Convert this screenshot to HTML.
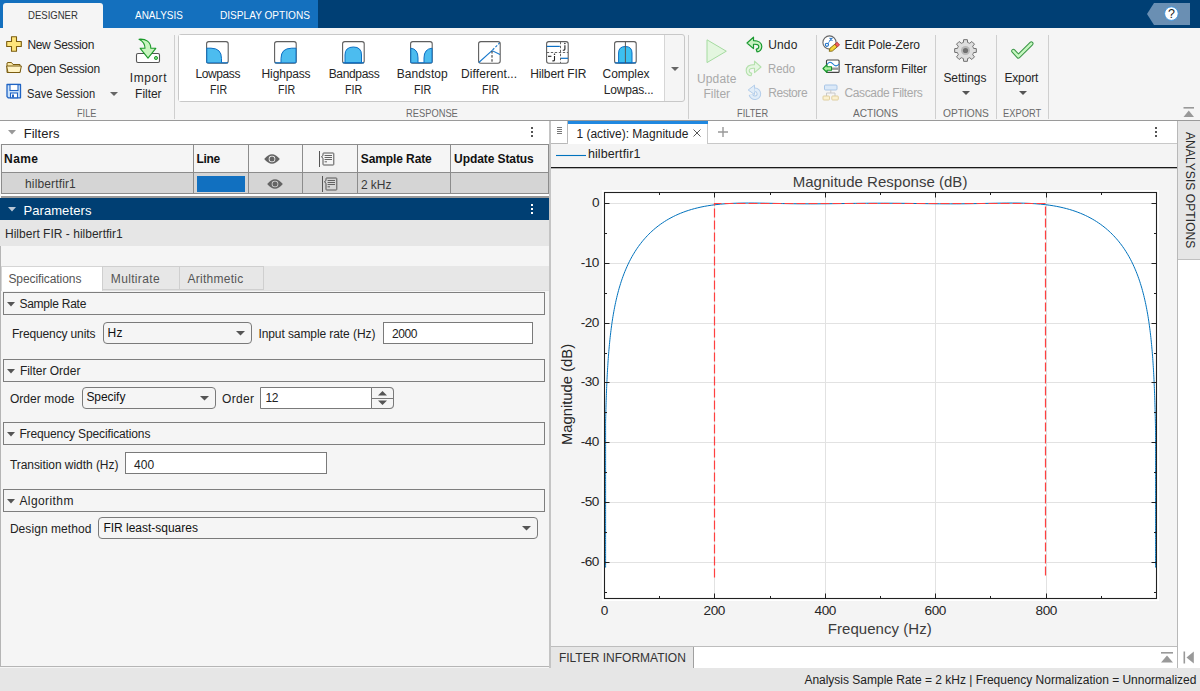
<!DOCTYPE html>
<html><head><meta charset="utf-8">
<style>
*{box-sizing:border-box;margin:0;padding:0}
html,body{width:1200px;height:691px;overflow:hidden;background:#f5f5f5;font-family:"Liberation Sans",sans-serif;font-size:12px;color:#222}
.a{position:absolute;white-space:nowrap}
svg.a{overflow:visible}
</style></head><body>

<div class="a" style="left:0;top:0;width:318px;height:28px;background:#1470be"></div>
<div class="a" style="left:318px;top:0;width:882px;height:28px;background:#003f74"></div>
<div class="a" style="left:3px;top:3px;width:100px;height:25px;background:#f5f5f5;border-radius:3px 3px 0 0"></div>
<svg class="a" style="left:1147px;top:3px" width="43" height="22"><path d="M7 0H43V22H7L0 11Z" fill="#6a8fb3"/><circle cx="24.4" cy="10.6" r="6.8" fill="#fff" stroke="#3592e0" stroke-width="0.9"/><text x="24.5" y="15" text-anchor="middle" font-family="Liberation Sans" font-size="12.5" fill="#222">?</text></svg>
<div class="a" style="left:0;top:120px;width:1200px;height:1px;background:#9a9a9a"></div>
<div class="a" style="left:174px;top:35px;width:1px;height:84px;background:#cfcfcf"></div>
<div class="a" style="left:688px;top:35px;width:1px;height:84px;background:#cfcfcf"></div>
<div class="a" style="left:816px;top:35px;width:1px;height:84px;background:#cfcfcf"></div>
<div class="a" style="left:935px;top:35px;width:1px;height:84px;background:#cfcfcf"></div>
<div class="a" style="left:996px;top:35px;width:1px;height:84px;background:#cfcfcf"></div>
<div class="a" style="left:1048px;top:35px;width:1px;height:84px;background:#cfcfcf"></div>
<div class="a" style="left:178px;top:34px;width:507px;height:68px;border:1px solid #c8c8c8;border-radius:3px;background:#f5f5f5"></div>
<div class="a" style="left:179px;top:35px;width:486px;height:66px;background:#fff;border-right:1px solid #d6d6d6"></div>
<svg class="a" style="left:110px;top:92px" width="8" height="4"><path d="M0 0H8L4.0 4Z" fill="#666"/></svg>
<svg class="a" style="left:671px;top:67px" width="8" height="4"><path d="M0 0H8L4.0 4Z" fill="#666"/></svg>
<svg class="a" style="left:962px;top:91px" width="8" height="4"><path d="M0 0H8L4.0 4Z" fill="#555"/></svg>
<svg class="a" style="left:1019px;top:91px" width="8" height="4"><path d="M0 0H8L4.0 4Z" fill="#555"/></svg>
<svg class="a" style="left:1183px;top:107px" width="12" height="11"><rect x="0.5" y="0" width="10.5" height="1.6" fill="#999"/><path d="M0.5 10H11L5.75 3.5Z" fill="#999"/></svg>
<svg class="a" style="left:6px;top:36px" width="16" height="16"><path d="M5.5 0.7H10.5V5.5H15.3V10.5H10.5V15.3H5.5V10.5H0.7V5.5H5.5Z" fill="#ffe57a" stroke="#7a5c10" stroke-width="1.1" stroke-linejoin="round"/></svg>
<svg class="a" style="left:6px;top:60px" width="16" height="14"><path d="M1 3V12.5H14V4.5H7L5.5 2.5H2Z" fill="#fbe9a8" stroke="#7a5c10" stroke-width="1"/><path d="M0.6 6H13L15.4 6L14 12.5H2Z" fill="#fff3c4" stroke="#7a5c10" stroke-width="1" stroke-linejoin="round"/></svg>
<svg class="a" style="left:6px;top:83px" width="16" height="16"><path d="M1 1.5H14.5V14.8H2.2L1 13.6Z" fill="#cde4fb" stroke="#1f63c4" stroke-width="1.3" stroke-linejoin="round"/><rect x="4" y="1.5" width="8" height="6" fill="#fff" stroke="#1f63c4" stroke-width="1.1"/><rect x="4.5" y="10" width="7" height="4.8" fill="#fff" stroke="#1f63c4" stroke-width="1.1"/><rect x="6" y="11.5" width="2" height="3" fill="#1f63c4"/></svg>
<svg class="a" style="left:135px;top:38px" width="26" height="26"><rect x="1.5" y="15.5" width="23" height="9" rx="1.5" fill="#fff" stroke="#555" stroke-width="1.1"/><path d="M4 1.2C11 0.6 15.8 4 15.8 10.3H20.8L13 20.2L5.2 10.3H10C10 6.5 8 3.2 4 1.2Z" fill="#c9f5c0" stroke="#1c9a2a" stroke-width="1.1" stroke-linejoin="round"/><circle cx="21" cy="20" r="1.6" fill="#7ad27a" stroke="#1c9a2a" stroke-width="0.9"/></svg>
<svg class="a" style="left:206px;top:41px" width="23" height="23"><rect x="0.6" y="0.6" width="21.6" height="21.6" rx="2.2" fill="#fff" stroke="#5f5f5f" stroke-width="1.1"/><path d="M0.8 7.2H5Q15.5 7.2 15.5 17.5V21.8H0.8Z" fill="#4cbcef" stroke="#0b6fc4" stroke-width="1"/><path d="M15.5 21.8H22" stroke="#0b6fc4" stroke-width="1.2"/></svg>
<svg class="a" style="left:274px;top:41px" width="23" height="23"><rect x="0.6" y="0.6" width="21.6" height="21.6" rx="2.2" fill="#fff" stroke="#5f5f5f" stroke-width="1.1"/><path d="M22 7.2H17.8Q7 7.2 7 17.5V21.8H22Z" fill="#4cbcef" stroke="#0b6fc4" stroke-width="1"/><path d="M0.8 21.8H7" stroke="#0b6fc4" stroke-width="1.2"/></svg>
<svg class="a" style="left:342px;top:41px" width="23" height="23"><rect x="0.6" y="0.6" width="21.6" height="21.6" rx="2.2" fill="#fff" stroke="#5f5f5f" stroke-width="1.1"/><path d="M3 21.8V14Q3 6 11.4 6Q19.5 6 19.5 14V21.8Z" fill="#4cbcef" stroke="#0b6fc4" stroke-width="1"/><path d="M0.8 21.8H22" stroke="#0b6fc4" stroke-width="1.2"/></svg>
<svg class="a" style="left:410px;top:41px" width="23" height="23"><rect x="0.6" y="0.6" width="21.6" height="21.6" rx="2.2" fill="#fff" stroke="#5f5f5f" stroke-width="1.1"/><path d="M0.8 7.2Q8 8 8 17V21.8H0.8Z" fill="#4cbcef" stroke="#0b6fc4" stroke-width="1"/><path d="M22 7.2Q14 8 14 17V21.8H22Z" fill="#4cbcef" stroke="#0b6fc4" stroke-width="1"/><path d="M8 21.8H14" stroke="#0b6fc4" stroke-width="1.2"/></svg>
<svg class="a" style="left:478px;top:41px" width="23" height="23"><rect x="0.6" y="0.6" width="21.6" height="21.6" rx="2.2" fill="#fff" stroke="#5f5f5f" stroke-width="1.1"/><path d="M0.8 21.5L14 9.6L22 13.6" fill="none" stroke="#1778cc" stroke-width="1.1"/><path d="M14.5 9L21.6 2" fill="none" stroke="#1778cc" stroke-width="1.1" stroke-dasharray="2.5 1.6"/><path d="M14 10V22" stroke="#222" stroke-width="1" stroke-dasharray="2.5 1.6"/></svg>
<svg class="a" style="left:546px;top:41px" width="23" height="23"><rect x="0.6" y="0.6" width="21.6" height="21.6" rx="2.2" fill="#fff" stroke="#5f5f5f" stroke-width="1.1"/><path d="M0.8 5.4H13.8" stroke="#0b6fc4" stroke-width="1.2"/><path d="M14.6 17.3H22" stroke="#0b6fc4" stroke-width="1.2"/><path d="M0.8 11.5H22" stroke="#666" stroke-width="1" stroke-dasharray="2.4 1.6"/><path d="M14.5 0.8V22" stroke="#666" stroke-width="1" stroke-dasharray="2.4 1.6"/><circle cx="18.9" cy="2.5" r="0.75" fill="#222"/><path d="M18.9 4.2V8.3Q18.9 9.3 17.4 9.3H16.8" fill="none" stroke="#222" stroke-width="1.1"/><path d="M2 15.3H5.4" stroke="#222" stroke-width="1.1"/><circle cx="8.5" cy="13.2" r="0.75" fill="#222"/><path d="M8.5 14.9V18.9Q8.5 19.9 7 19.9H6.4" fill="none" stroke="#222" stroke-width="1.1"/></svg>
<svg class="a" style="left:614px;top:41px" width="23" height="23"><rect x="0.6" y="0.6" width="21.6" height="21.6" rx="2.2" fill="#fff" stroke="#5f5f5f" stroke-width="1.1"/><path d="M4.6 21.8V12Q4.6 5.5 11.4 5.5Q18 5.5 18 12V21.8Z" fill="#3cc0f0" stroke="#0b6fc4" stroke-width="1"/><path d="M0.8 21.8H22" stroke="#0b6fc4" stroke-width="1.2"/><path d="M11.4 0.8V22" stroke="#555" stroke-width="1"/></svg>
<svg class="a" style="left:706px;top:39px" width="22" height="25"><path d="M1 0.8V23.6L20.3 12.2Z" fill="#e3f6df" stroke="#a5dba0" stroke-width="1"/></svg>
<svg class="a" style="left:746px;top:36px" width="17" height="17"><path d="M1 7L7.5 1.2V4.6C12.5 4.6 15.8 6.8 15.8 10.5C15.8 13.6 13.5 15.8 11 15.8L10.2 13.2C11.8 13 12.8 12 12.8 10.5C12.8 8.8 10.8 8 7.5 8.3V12.6Z" fill="#c8f2c0" stroke="#1a9830" stroke-width="1.2" stroke-linejoin="round"/></svg>
<svg class="a" style="left:745px;top:60px" width="17" height="17"><path d="M16 7L9.5 1.2V4.6C4.5 4.6 1.2 6.8 1.2 10.5C1.2 13.6 3.5 15.8 6 15.8L6.8 13.2C5.2 13 4.2 12 4.2 10.5C4.2 8.8 6.2 8 9.5 8.3V12.6Z" fill="#e6f6e2" stroke="#b4e0ac" stroke-width="1.1" stroke-linejoin="round"/></svg>
<svg class="a" style="left:747px;top:84px" width="16" height="17"><path d="M7.9 5.8A4 4 0 1 1 3.96 10.49" fill="none" stroke="#b3cdea" stroke-width="4.6"/><path d="M7.9 5.8A4 4 0 1 1 3.96 10.49" fill="none" stroke="#e2edf8" stroke-width="2.6"/><path d="M1.2 6L7.5 1.1V10.5Z" fill="#e2edf8" stroke="#b3cdea" stroke-width="1" stroke-linejoin="round"/><path d="M6.9 4.6V8.2" stroke="#e2edf8" stroke-width="1.2"/></svg>
<svg class="a" style="left:822px;top:35px" width="19" height="17"><circle cx="7.5" cy="7.5" r="6.6" fill="#fff" stroke="#666" stroke-width="1.1"/><path d="M7.6 2.8L10.4 5.6M10.4 2.8L7.6 5.6" stroke="#1a6fc8" stroke-width="1.1"/><path d="M9 4.2L5.6 9" stroke="#1a6fc8" stroke-width="0.7"/><circle cx="4.9" cy="9.8" r="1.6" fill="#fff" stroke="#1a6fc8" stroke-width="1.1"/><path d="M7.2 16.3L7.95 13.3L12.95 9.1L15.25 11.9L10.25 16.1Z" fill="#f5d33a" stroke="#7a6410" stroke-width="0.9" stroke-linejoin="round"/><path d="M12.95 9.1L15.25 7.2L17.55 10L15.25 11.9Z" fill="#f06060" stroke="#b03030" stroke-width="0.8" stroke-linejoin="round"/></svg>
<svg class="a" style="left:822px;top:59px" width="18" height="16"><rect x="4.5" y="1" width="12.6" height="12.4" rx="1" fill="#fff" stroke="#444" stroke-width="1.1"/><path d="M5 5.5C7 2.5 9 2.5 11 5S15 7.5 17 5" fill="none" stroke="#1a7ad0" stroke-width="1.1"/><rect x="8" y="8.5" width="8.5" height="2.4" fill="#999"/><path d="M1 9.5L5 5.6V7.8H9.5V11.2H5V13.5Z" fill="#aef0a0" stroke="#17952a" stroke-width="1.1" stroke-linejoin="round"/></svg>
<svg class="a" style="left:822px;top:84px" width="18" height="18"><rect x="2.5" y="1" width="12.5" height="5" rx="1" fill="#dbe9f8" stroke="#a9c6e6" stroke-width="1"/><path d="M8.8 6V9M4.5 9H13M4.5 9V12M13 9V12" stroke="#c9c9c9" stroke-width="1" fill="none"/><rect x="1" y="12" width="6.5" height="4" rx="0.8" fill="#fbf1cf" stroke="#dccb98" stroke-width="0.9"/><rect x="9.8" y="12" width="6.5" height="4" rx="0.8" fill="#fbf1cf" stroke="#dccb98" stroke-width="0.9"/></svg>
<svg class="a" style="left:954px;top:39px" width="23" height="23"><path d="M19.52 9.37 L22.34 9.64 L22.34 13.36 L19.52 13.63 L19.17 14.68 L18.68 15.66 L20.48 17.85 L17.85 20.48 L15.66 18.68 L14.68 19.17 L13.63 19.52 L13.36 22.34 L9.64 22.34 L9.37 19.52 L8.32 19.17 L7.34 18.68 L5.15 20.48 L2.52 17.85 L4.32 15.66 L3.83 14.68 L3.48 13.63 L0.66 13.36 L0.66 9.64 L3.48 9.37 L3.83 8.32 L4.32 7.34 L2.52 5.15 L5.15 2.52 L7.34 4.32 L8.32 3.83 L9.37 3.48 L9.64 0.66 L13.36 0.66 L13.63 3.48 L14.68 3.83 L15.66 4.32 L17.85 2.52 L20.48 5.15 L18.68 7.34 L19.17 8.32Z" fill="#dedede" stroke="#707070" stroke-width="1" stroke-linejoin="round"/><circle cx="11.5" cy="11.5" r="4.5" fill="#b8b8b8"/><circle cx="11.5" cy="11.5" r="2.6" fill="#707070"/></svg>
<svg class="a" style="left:1010px;top:41px" width="24" height="19"><path d="M3.4 10L8.4 15.4L21.3 2.6" fill="none" stroke="#3a9446" stroke-width="4.4" stroke-linecap="round" stroke-linejoin="round"/><path d="M3.4 10L8.4 15.4L21.3 2.6" fill="none" stroke="#c6f8c0" stroke-width="2.4" stroke-linecap="round" stroke-linejoin="round"/></svg>
<div class="a" style="left:0;top:121px;width:550px;height:23px;background:#fff"></div>
<svg class="a" style="left:8px;top:130px" width="8" height="5"><path d="M0 0H8L4 4.5Z" fill="#999"/></svg>
<div class="a" style="left:531px;top:127px;width:2px;height:2px;background:#555"></div>
<div class="a" style="left:531px;top:131px;width:2px;height:2px;background:#555"></div>
<div class="a" style="left:531px;top:135px;width:2px;height:2px;background:#555"></div>
<div class="a" style="left:1px;top:144px;width:549px;height:53px;background:#fff"></div>
<div class="a" style="left:1px;top:144px;width:549px;height:29px;background:#f5f5f5;border:1px solid #8c8c8c;border-right-width:2px"></div>
<div class="a" style="left:1px;top:172px;width:549px;height:22px;background:#d5d5d5;border:1px solid #8c8c8c;border-top:1px solid #8c8c8c;border-right-width:2px"></div>
<div class="a" style="left:1px;top:196px;width:549px;height:2px;background:#9a9a9a"></div>
<div class="a" style="left:193px;top:145px;width:1px;height:49px;background:#8c8c8c"></div>
<div class="a" style="left:248px;top:145px;width:1px;height:49px;background:#8c8c8c"></div>
<div class="a" style="left:302px;top:145px;width:1px;height:49px;background:#8c8c8c"></div>
<div class="a" style="left:357px;top:145px;width:1px;height:49px;background:#8c8c8c"></div>
<div class="a" style="left:450px;top:145px;width:1px;height:49px;background:#8c8c8c"></div>
<div class="a" style="left:197px;top:176px;width:48px;height:16px;background:#1170c0"></div>
<svg class="a" style="left:263.5px;top:153.6px" width="16" height="10"><path d="M0.2 5Q8 -4.6 15.8 5Q8 14.6 0.2 5Z" fill="#646464"/><circle cx="8" cy="5" r="3.3" fill="#f5f5f5"/><circle cx="8" cy="5" r="2.5" fill="#646464"/></svg>
<svg class="a" style="left:266.5px;top:178.5px" width="16" height="10"><path d="M0.2 5Q8 -4.6 15.8 5Q8 14.6 0.2 5Z" fill="#646464"/><circle cx="8" cy="5" r="3.3" fill="#d5d5d5"/><circle cx="8" cy="5" r="2.5" fill="#646464"/></svg>
<svg class="a" style="left:319px;top:151px" width="16" height="17"><path d="M0.5 0V16" stroke="#555" stroke-width="1"/><path d="M4 2.6Q4 2 4.6 2H14.2Q14.8 2 14.8 2.6V13.4Q14.8 14 14.2 14H4.6Q4 14 4 13.4V7.2L2.4 5.8L4 4.6Z" fill="none" stroke="#555" stroke-width="1"/><path d="M5.6 4.5H13M5.6 6.5H13M5.6 8.5H13M5.6 10.8H8" stroke="#555" stroke-width="0.9"/></svg>
<svg class="a" style="left:322px;top:176px" width="16" height="17"><path d="M0.5 0V16" stroke="#555" stroke-width="1"/><path d="M4 2.6Q4 2 4.6 2H14.2Q14.8 2 14.8 2.6V13.4Q14.8 14 14.2 14H4.6Q4 14 4 13.4V7.2L2.4 5.8L4 4.6Z" fill="none" stroke="#555" stroke-width="1"/><path d="M5.6 4.5H13M5.6 6.5H13M5.6 8.5H13M5.6 10.8H8" stroke="#555" stroke-width="0.9"/></svg>
<div class="a" style="left:0;top:198px;width:550px;height:22px;background:#003f73"></div>
<svg class="a" style="left:8px;top:207px" width="8" height="5"><path d="M0 0H8L4 4.5Z" fill="#b9c7d6"/></svg>
<div class="a" style="left:531px;top:204px;width:2px;height:2px;background:#fff"></div>
<div class="a" style="left:531px;top:208px;width:2px;height:2px;background:#fff"></div>
<div class="a" style="left:531px;top:212px;width:2px;height:2px;background:#fff"></div>
<div class="a" style="left:0;top:220px;width:550px;height:26px;background:#e6e6e6"></div>
<div class="a" style="left:0;top:246px;width:1px;height:421px;background:#b5b5b5"></div>
<div class="a" style="left:0;top:666px;width:551px;height:1px;background:#b5b5b5"></div>
<div class="a" style="left:1px;top:290px;width:549px;height:1px;background:#e0e0e0"></div>
<div class="a" style="left:1px;top:266px;width:102px;height:25px;background:#fff;border:1px solid #d5d5d5;border-bottom:none"></div>
<div class="a" style="left:102px;top:266px;width:78px;height:24px;background:#e7e7e7;border:1px solid #cfcfcf"></div>
<div class="a" style="left:179px;top:266px;width:85px;height:24px;background:#e7e7e7;border:1px solid #cfcfcf"></div>
<div class="a" style="left:264px;top:266px;width:286px;height:24px;background:#e7e7e7"></div>
<div class="a" style="left:3px;top:292px;width:542px;height:23px;border:1px solid #7e7e7e"></div>
<svg class="a" style="left:7px;top:302px" width="8" height="5"><path d="M0 0H8L4 4.5Z" fill="#555"/></svg>
<div class="a" style="left:3px;top:359px;width:542px;height:23px;border:1px solid #7e7e7e"></div>
<svg class="a" style="left:7px;top:369px" width="8" height="5"><path d="M0 0H8L4 4.5Z" fill="#555"/></svg>
<div class="a" style="left:3px;top:422px;width:542px;height:23px;border:1px solid #7e7e7e"></div>
<svg class="a" style="left:7px;top:432px" width="8" height="5"><path d="M0 0H8L4 4.5Z" fill="#555"/></svg>
<div class="a" style="left:3px;top:489px;width:542px;height:23px;border:1px solid #7e7e7e"></div>
<svg class="a" style="left:7px;top:499px" width="8" height="5"><path d="M0 0H8L4 4.5Z" fill="#555"/></svg>
<div class="a" style="left:103px;top:322px;width:149px;height:22px;border:1px solid #7a7a7a;border-radius:4px;background:#f5f5f5"></div>
<svg class="a" style="left:236px;top:331px" width="9" height="5"><path d="M0 0H9L4.5 4.5Z" fill="#555"/></svg>
<div class="a" style="left:383px;top:322px;width:150px;height:22px;border:1px solid #7a7a7a;background:#fff"></div>
<div class="a" style="left:82px;top:387px;width:134px;height:22px;border:1px solid #7a7a7a;border-radius:4px;background:#f5f5f5"></div>
<svg class="a" style="left:200px;top:396px" width="9" height="5"><path d="M0 0H9L4.5 4.5Z" fill="#555"/></svg>
<div class="a" style="left:260px;top:387px;width:134px;height:22px;border:1px solid #7a7a7a;border-radius:0 4px 4px 0;background:#fff"></div>
<div class="a" style="left:371px;top:387px;width:23px;height:22px;border:1px solid #7a7a7a;border-radius:0 4px 4px 0;background:#f5f5f5"></div>
<div class="a" style="left:371px;top:397.5px;width:23px;height:1px;background:#7a7a7a"></div>
<svg class="a" style="left:378px;top:391px" width="10" height="16"><path d="M0 4.5H9L4.5 0Z" fill="#555"/><path d="M0 9.5H9L4.5 14Z" fill="#555"/></svg>
<div class="a" style="left:125px;top:452px;width:202px;height:22px;border:1px solid #7a7a7a;background:#fff"></div>
<div class="a" style="left:98px;top:517px;width:440px;height:22px;border:1px solid #7a7a7a;border-radius:4px;background:#f5f5f5"></div>
<svg class="a" style="left:522px;top:526px" width="9" height="5"><path d="M0 0H9L4.5 4.5Z" fill="#555"/></svg>
<div class="a" style="left:549px;top:121px;width:2px;height:547px;background:#c4c4c4"></div>
<div class="a" style="left:551px;top:667px;width:626px;height:1px;background:#bdbdbd"></div>
<div class="a" style="left:551px;top:121px;width:627px;height:23px;background:#fff"></div>
<div class="a" style="left:551px;top:143px;width:627px;height:1px;background:#c8c8c8"></div>
<div class="a" style="left:551px;top:121px;width:17px;height:23px;background:#fff;border-right:1px solid #b8b8b8;border-bottom:1px solid #b8b8b8;border-radius:0 0 2px 0"></div>
<div class="a" style="left:557px;top:127px;width:5px;height:1px;background:#777"></div>
<div class="a" style="left:557px;top:129px;width:5px;height:1px;background:#777"></div>
<div class="a" style="left:557px;top:131px;width:5px;height:1px;background:#777"></div>
<div class="a" style="left:557px;top:133px;width:5px;height:1px;background:#777"></div>
<div class="a" style="left:568px;top:121px;width:140px;height:23px;background:#fff;border-right:1px solid #c8c8c8"></div>
<div class="a" style="left:568px;top:121px;width:140px;height:3px;background:#2088e0"></div>
<svg class="a" style="left:692px;top:128px" width="10" height="10"><path d="M1.5 1.5L8.5 8.5M8.5 1.5L1.5 8.5" stroke="#444" stroke-width="0.9"/></svg>
<svg class="a" style="left:718px;top:127px" width="10" height="10"><path d="M5 0V10M0 5H10" stroke="#999" stroke-width="1.4"/></svg>
<div class="a" style="left:1155px;top:127px;width:2px;height:2px;background:#555"></div>
<div class="a" style="left:1155px;top:131px;width:2px;height:2px;background:#555"></div>
<div class="a" style="left:1155px;top:135px;width:2px;height:2px;background:#555"></div>
<div class="a" style="left:551px;top:144px;width:626px;height:502px;background:#f4f4f4"></div>
<div class="a" style="left:1177px;top:121px;width:1px;height:547px;background:#b8b8b8"></div>
<svg class="a" style="left:0;top:0" width="1200" height="691">
<rect x="551" y="167" width="626" height="1.3" fill="#1a1a1a"/>
<line x1="556" y1="155.5" x2="586" y2="155.5" stroke="#0072bd" stroke-width="1.1"/>
<rect x="602" y="190" width="557" height="411" fill="#fff"/>
<line x1="714.5" y1="192" x2="714.5" y2="598" stroke="#e2e2e2" stroke-width="1"/>
<line x1="825.5" y1="192" x2="825.5" y2="598" stroke="#e2e2e2" stroke-width="1"/>
<line x1="935.5" y1="192" x2="935.5" y2="598" stroke="#e2e2e2" stroke-width="1"/>
<line x1="1046.5" y1="192" x2="1046.5" y2="598" stroke="#e2e2e2" stroke-width="1"/>
<line x1="604" y1="203.5" x2="1156" y2="203.5" stroke="#e2e2e2" stroke-width="1"/>
<line x1="604" y1="263.5" x2="1156" y2="263.5" stroke="#e2e2e2" stroke-width="1"/>
<line x1="604" y1="323.5" x2="1156" y2="323.5" stroke="#e2e2e2" stroke-width="1"/>
<line x1="604" y1="382.5" x2="1156" y2="382.5" stroke="#e2e2e2" stroke-width="1"/>
<line x1="604" y1="442.5" x2="1156" y2="442.5" stroke="#e2e2e2" stroke-width="1"/>
<line x1="604" y1="502.5" x2="1156" y2="502.5" stroke="#e2e2e2" stroke-width="1"/>
<line x1="604" y1="562.5" x2="1156" y2="562.5" stroke="#e2e2e2" stroke-width="1"/>
<polyline points="605.60,567.54 605.60,565.78 605.60,564.03 605.60,562.27 605.60,560.51 605.60,558.76 605.60,557.00 605.60,555.25 605.60,553.49 605.60,551.73 605.60,549.98 605.60,548.22 605.60,546.46 605.60,544.71 605.60,542.95 605.60,541.20 605.60,539.44 605.60,537.68 605.60,535.93 605.60,534.17 605.60,532.41 605.60,530.66 605.60,528.90 605.60,527.14 605.60,525.39 605.60,523.63 605.60,521.88 605.60,520.12 605.60,518.36 605.60,516.61 605.60,514.85 605.60,513.09 605.60,511.34 605.60,509.58 605.60,507.83 605.60,506.07 605.60,504.31 605.60,502.56 605.60,500.80 605.60,499.04 605.60,497.29 605.60,495.53 605.60,493.78 605.60,492.02 605.60,490.26 605.60,488.51 605.60,486.75 605.60,484.99 605.60,483.24 605.60,481.48 605.60,479.73 605.60,477.97 605.60,476.21 605.60,474.46 605.60,472.70 605.60,470.94 605.60,469.19 605.60,467.43 605.60,465.68 605.60,463.92 605.60,462.16 605.60,460.41 605.60,458.65 605.60,456.89 605.60,455.14 605.60,453.38 605.60,451.63 605.60,449.87 605.60,448.11 605.60,446.36 605.60,444.60 605.60,442.84 605.60,441.09 605.60,439.33 605.60,437.58 605.60,435.82 605.60,434.06 605.60,432.31 605.60,430.55 605.60,428.80 605.60,427.04 605.60,425.28 605.60,423.53 605.61,421.77 605.65,420.01 605.69,418.26 605.73,416.50 605.78,414.75 605.82,412.99 605.86,411.23 605.91,409.48 605.96,407.72 606.01,405.97 606.06,404.21 606.12,402.45 606.17,400.70 606.23,398.94 606.29,397.19 606.35,395.43 606.41,393.68 606.48,391.92 606.55,390.16 606.62,388.41 606.69,386.65 606.77,384.90 606.84,383.14 606.92,381.39 607.01,379.63 607.09,377.87 607.18,376.12 607.27,374.36 607.37,372.61 607.47,370.85 607.57,369.10 607.68,367.34 607.79,365.59 607.90,363.83 608.01,362.08 608.14,360.32 608.26,358.57 608.39,356.82 608.52,355.06 608.66,353.31 608.80,351.55 608.95,349.80 609.11,348.05 609.26,346.29 609.43,344.54 609.60,342.79 609.77,341.03 609.95,339.28 610.14,337.53 610.34,335.78 610.54,334.03 610.74,332.28 610.96,330.52 611.18,328.77 611.41,327.02 611.65,325.27 611.89,323.53 612.15,321.78 612.41,320.03 612.68,318.28 612.96,316.53 613.25,314.79 613.55,313.04 613.87,311.30 614.19,309.55 614.52,307.81 614.86,306.07 615.22,304.33 615.59,302.59 615.97,300.85 616.37,299.11 616.77,297.37 617.19,295.64 617.63,293.90 618.08,292.17 618.55,290.44 619.03,288.71 619.53,286.98 620.05,285.26 620.58,283.54 621.14,281.81 621.71,280.10 622.30,278.38 622.91,276.67 623.54,274.96 624.20,273.25 624.88,271.55 625.58,269.85 626.30,268.16 627.05,266.47 627.82,264.78 628.63,263.10 629.46,261.42 630.31,259.75 631.20,258.09 632.12,256.43 633.07,254.78 634.05,253.13 635.07,251.50 636.12,249.87 637.20,248.25 638.33,246.64 639.49,245.04 640.69,243.45 641.94,241.87 643.22,240.31 644.55,238.75 645.93,237.22 647.36,235.69 648.83,234.18 650.35,232.69 651.93,231.22 653.56,229.76 655.24,228.33 656.99,226.92 658.79,225.53 660.66,224.16 662.59,222.82 664.59,221.51 666.65,220.23 668.79,218.98 671.00,217.76 673.28,216.57 675.65,215.42 678.09,214.31 680.62,213.24 683.24,212.22 685.95,211.23 688.75,210.30 691.64,209.41 694.64,208.58 697.74,207.80 700.94,207.07 704.26,206.40 707.68,205.79 711.23,205.24 714.90,204.76 720.51,204.15 726.13,203.70 731.74,203.38 737.35,203.18 742.97,203.07 748.58,203.03 754.19,203.05 759.81,203.12 765.42,203.21 771.04,203.32 776.65,203.44 782.26,203.55 787.88,203.65 793.49,203.74 799.10,203.80 804.72,203.83 810.33,203.85 815.94,203.83 821.56,203.80 827.17,203.75 832.78,203.68 838.40,203.60 844.01,203.52 849.63,203.44 855.24,203.37 860.85,203.30 866.47,203.25 872.08,203.21 877.69,203.19 883.31,203.19 888.92,203.21 894.53,203.25 900.15,203.30 905.76,203.37 911.37,203.44 916.99,203.52 922.60,203.60 928.22,203.68 933.83,203.75 939.44,203.80 945.06,203.83 950.67,203.85 956.28,203.83 961.90,203.80 967.51,203.74 973.12,203.65 978.74,203.55 984.35,203.44 989.96,203.32 995.58,203.21 1001.19,203.12 1006.81,203.05 1012.42,203.03 1018.03,203.07 1023.65,203.18 1029.26,203.38 1034.87,203.70 1040.49,204.15 1046.10,204.76 1049.77,205.24 1053.32,205.79 1056.74,206.40 1060.06,207.07 1063.26,207.80 1066.36,208.58 1069.36,209.41 1072.25,210.30 1075.05,211.23 1077.76,212.22 1080.38,213.24 1082.91,214.31 1085.35,215.42 1087.72,216.57 1090.00,217.76 1092.21,218.98 1094.35,220.23 1096.41,221.51 1098.41,222.82 1100.34,224.16 1102.21,225.53 1104.01,226.92 1105.76,228.33 1107.44,229.76 1109.07,231.22 1110.65,232.69 1112.17,234.18 1113.64,235.69 1115.07,237.22 1116.45,238.75 1117.78,240.31 1119.06,241.87 1120.31,243.45 1121.51,245.04 1122.67,246.64 1123.80,248.25 1124.88,249.87 1125.93,251.50 1126.95,253.13 1127.93,254.78 1128.88,256.43 1129.80,258.09 1130.69,259.75 1131.54,261.42 1132.37,263.10 1133.18,264.78 1133.95,266.47 1134.70,268.16 1135.42,269.85 1136.12,271.55 1136.80,273.25 1137.46,274.96 1138.09,276.67 1138.70,278.38 1139.29,280.10 1139.86,281.81 1140.42,283.54 1140.95,285.26 1141.47,286.98 1141.97,288.71 1142.45,290.44 1142.92,292.17 1143.37,293.90 1143.81,295.64 1144.23,297.37 1144.63,299.11 1145.03,300.85 1145.41,302.59 1145.78,304.33 1146.14,306.07 1146.48,307.81 1146.81,309.55 1147.13,311.30 1147.45,313.04 1147.75,314.79 1148.04,316.53 1148.32,318.28 1148.59,320.03 1148.85,321.78 1149.11,323.53 1149.35,325.27 1149.59,327.02 1149.82,328.77 1150.04,330.52 1150.26,332.28 1150.46,334.03 1150.66,335.78 1150.86,337.53 1151.05,339.28 1151.23,341.03 1151.40,342.79 1151.57,344.54 1151.74,346.29 1151.89,348.05 1152.05,349.80 1152.20,351.55 1152.34,353.31 1152.48,355.06 1152.61,356.82 1152.74,358.57 1152.86,360.32 1152.99,362.08 1153.10,363.83 1153.21,365.59 1153.32,367.34 1153.43,369.10 1153.53,370.85 1153.63,372.61 1153.73,374.36 1153.82,376.12 1153.91,377.87 1153.99,379.63 1154.08,381.39 1154.16,383.14 1154.23,384.90 1154.31,386.65 1154.38,388.41 1154.45,390.16 1154.52,391.92 1154.59,393.68 1154.65,395.43 1154.71,397.19 1154.77,398.94 1154.83,400.70 1154.88,402.45 1154.94,404.21 1154.99,405.97 1155.04,407.72 1155.09,409.48 1155.14,411.23 1155.18,412.99 1155.22,414.75 1155.27,416.50 1155.31,418.26 1155.35,420.01 1155.39,421.77 1155.42,423.53 1155.46,425.28 1155.49,427.04 1155.53,428.80 1155.56,430.55 1155.59,432.31 1155.60,434.06 1155.60,435.82 1155.60,437.58 1155.60,439.33 1155.60,441.09 1155.60,442.84 1155.60,444.60 1155.60,446.36 1155.60,448.11 1155.60,449.87 1155.60,451.63 1155.60,453.38 1155.60,455.14 1155.60,456.89 1155.60,458.65 1155.60,460.41 1155.60,462.16 1155.60,463.92 1155.60,465.68 1155.60,467.43 1155.60,469.19 1155.60,470.94 1155.60,472.70 1155.60,474.46 1155.60,476.21 1155.60,477.97 1155.60,479.73 1155.60,481.48 1155.60,483.24 1155.60,484.99 1155.60,486.75 1155.60,488.51 1155.60,490.26 1155.60,492.02 1155.60,493.78 1155.60,495.53 1155.60,497.29 1155.60,499.04 1155.60,500.80 1155.60,502.56 1155.60,504.31 1155.60,506.07 1155.60,507.83 1155.60,509.58 1155.60,511.34 1155.60,513.09 1155.60,514.85 1155.60,516.61 1155.60,518.36 1155.60,520.12 1155.60,521.88 1155.60,523.63 1155.60,525.39 1155.60,527.14 1155.60,528.90 1155.60,530.66 1155.60,532.41 1155.60,534.17 1155.60,535.93 1155.60,537.68 1155.60,539.44 1155.60,541.20 1155.60,542.95 1155.60,544.71 1155.60,546.46 1155.60,548.22 1155.60,549.98 1155.60,551.73 1155.60,553.49 1155.60,555.25 1155.60,557.00 1155.60,558.76 1155.60,560.51 1155.60,562.27 1155.60,564.03 1155.60,565.78 1155.60,567.54" fill="none" stroke="#0072bd" stroke-width="1"/>
<path d="M714.5 577.5V203.5H1045.5V577.5" fill="none" stroke="#ff4040" stroke-width="1.2" stroke-dasharray="9 3"/>
<rect x="604.5" y="192.5" width="552" height="406" fill="none" stroke="#212121" stroke-width="1.1"/>
<line x1="604.5" y1="192" x2="604.5" y2="197.5" stroke="#212121" stroke-width="1"/>
<line x1="604.5" y1="599" x2="604.5" y2="593.5" stroke="#212121" stroke-width="1"/>
<line x1="659.5" y1="192" x2="659.5" y2="195" stroke="#212121" stroke-width="1"/>
<line x1="659.5" y1="599" x2="659.5" y2="596" stroke="#212121" stroke-width="1"/>
<line x1="714.5" y1="192" x2="714.5" y2="197.5" stroke="#212121" stroke-width="1"/>
<line x1="714.5" y1="599" x2="714.5" y2="593.5" stroke="#212121" stroke-width="1"/>
<line x1="770.5" y1="192" x2="770.5" y2="195" stroke="#212121" stroke-width="1"/>
<line x1="770.5" y1="599" x2="770.5" y2="596" stroke="#212121" stroke-width="1"/>
<line x1="825.5" y1="192" x2="825.5" y2="197.5" stroke="#212121" stroke-width="1"/>
<line x1="825.5" y1="599" x2="825.5" y2="593.5" stroke="#212121" stroke-width="1"/>
<line x1="880.5" y1="192" x2="880.5" y2="195" stroke="#212121" stroke-width="1"/>
<line x1="880.5" y1="599" x2="880.5" y2="596" stroke="#212121" stroke-width="1"/>
<line x1="935.5" y1="192" x2="935.5" y2="197.5" stroke="#212121" stroke-width="1"/>
<line x1="935.5" y1="599" x2="935.5" y2="593.5" stroke="#212121" stroke-width="1"/>
<line x1="990.5" y1="192" x2="990.5" y2="195" stroke="#212121" stroke-width="1"/>
<line x1="990.5" y1="599" x2="990.5" y2="596" stroke="#212121" stroke-width="1"/>
<line x1="1046.5" y1="192" x2="1046.5" y2="197.5" stroke="#212121" stroke-width="1"/>
<line x1="1046.5" y1="599" x2="1046.5" y2="593.5" stroke="#212121" stroke-width="1"/>
<line x1="1101.5" y1="192" x2="1101.5" y2="195" stroke="#212121" stroke-width="1"/>
<line x1="1101.5" y1="599" x2="1101.5" y2="596" stroke="#212121" stroke-width="1"/>
<line x1="1156.5" y1="192" x2="1156.5" y2="197.5" stroke="#212121" stroke-width="1"/>
<line x1="1156.5" y1="599" x2="1156.5" y2="593.5" stroke="#212121" stroke-width="1"/>
<line x1="604" y1="203.5" x2="609.5" y2="203.5" stroke="#212121" stroke-width="1"/>
<line x1="1157" y1="203.5" x2="1151.5" y2="203.5" stroke="#212121" stroke-width="1"/>
<line x1="604" y1="233.5" x2="607" y2="233.5" stroke="#212121" stroke-width="1"/>
<line x1="1157" y1="233.5" x2="1154" y2="233.5" stroke="#212121" stroke-width="1"/>
<line x1="604" y1="263.5" x2="609.5" y2="263.5" stroke="#212121" stroke-width="1"/>
<line x1="1157" y1="263.5" x2="1151.5" y2="263.5" stroke="#212121" stroke-width="1"/>
<line x1="604" y1="293.5" x2="607" y2="293.5" stroke="#212121" stroke-width="1"/>
<line x1="1157" y1="293.5" x2="1154" y2="293.5" stroke="#212121" stroke-width="1"/>
<line x1="604" y1="323.5" x2="609.5" y2="323.5" stroke="#212121" stroke-width="1"/>
<line x1="1157" y1="323.5" x2="1151.5" y2="323.5" stroke="#212121" stroke-width="1"/>
<line x1="604" y1="353.5" x2="607" y2="353.5" stroke="#212121" stroke-width="1"/>
<line x1="1157" y1="353.5" x2="1154" y2="353.5" stroke="#212121" stroke-width="1"/>
<line x1="604" y1="382.5" x2="609.5" y2="382.5" stroke="#212121" stroke-width="1"/>
<line x1="1157" y1="382.5" x2="1151.5" y2="382.5" stroke="#212121" stroke-width="1"/>
<line x1="604" y1="412.5" x2="607" y2="412.5" stroke="#212121" stroke-width="1"/>
<line x1="1157" y1="412.5" x2="1154" y2="412.5" stroke="#212121" stroke-width="1"/>
<line x1="604" y1="442.5" x2="609.5" y2="442.5" stroke="#212121" stroke-width="1"/>
<line x1="1157" y1="442.5" x2="1151.5" y2="442.5" stroke="#212121" stroke-width="1"/>
<line x1="604" y1="472.5" x2="607" y2="472.5" stroke="#212121" stroke-width="1"/>
<line x1="1157" y1="472.5" x2="1154" y2="472.5" stroke="#212121" stroke-width="1"/>
<line x1="604" y1="502.5" x2="609.5" y2="502.5" stroke="#212121" stroke-width="1"/>
<line x1="1157" y1="502.5" x2="1151.5" y2="502.5" stroke="#212121" stroke-width="1"/>
<line x1="604" y1="532.5" x2="607" y2="532.5" stroke="#212121" stroke-width="1"/>
<line x1="1157" y1="532.5" x2="1154" y2="532.5" stroke="#212121" stroke-width="1"/>
<line x1="604" y1="562.5" x2="609.5" y2="562.5" stroke="#212121" stroke-width="1"/>
<line x1="1157" y1="562.5" x2="1151.5" y2="562.5" stroke="#212121" stroke-width="1"/>
<line x1="604" y1="592.5" x2="607" y2="592.5" stroke="#212121" stroke-width="1"/>
<line x1="1157" y1="592.5" x2="1154" y2="592.5" stroke="#212121" stroke-width="1"/>
<text x="599" y="207.2" text-anchor="end" font-size="13.6" letter-spacing="-0.45" font-family="Liberation Sans" fill="#262626">0</text>
<text x="599" y="267.2" text-anchor="end" font-size="13.6" letter-spacing="-0.45" font-family="Liberation Sans" fill="#262626">-10</text>
<text x="599" y="327.2" text-anchor="end" font-size="13.6" letter-spacing="-0.45" font-family="Liberation Sans" fill="#262626">-20</text>
<text x="599" y="386.2" text-anchor="end" font-size="13.6" letter-spacing="-0.45" font-family="Liberation Sans" fill="#262626">-30</text>
<text x="599" y="446.2" text-anchor="end" font-size="13.6" letter-spacing="-0.45" font-family="Liberation Sans" fill="#262626">-40</text>
<text x="599" y="506.2" text-anchor="end" font-size="13.6" letter-spacing="-0.45" font-family="Liberation Sans" fill="#262626">-50</text>
<text x="599" y="566.2" text-anchor="end" font-size="13.6" letter-spacing="-0.45" font-family="Liberation Sans" fill="#262626">-60</text>
<text x="604.2" y="615.2" text-anchor="middle" font-size="13.6" letter-spacing="-0.45" font-family="Liberation Sans" fill="#262626">0</text>
<text x="714.2" y="615.2" text-anchor="middle" font-size="13.6" letter-spacing="-0.45" font-family="Liberation Sans" fill="#262626">200</text>
<text x="825.2" y="615.2" text-anchor="middle" font-size="13.6" letter-spacing="-0.45" font-family="Liberation Sans" fill="#262626">400</text>
<text x="935.2" y="615.2" text-anchor="middle" font-size="13.6" letter-spacing="-0.45" font-family="Liberation Sans" fill="#262626">600</text>
<text x="1046.2" y="615.2" text-anchor="middle" font-size="13.6" letter-spacing="-0.45" font-family="Liberation Sans" fill="#262626">800</text>
<text transform="translate(572.2 394.5) rotate(-90)" text-anchor="middle" font-size="14.8" font-family="Liberation Sans" fill="#262626">Magnitude (dB)</text>
</svg>
<div class="a" style="left:551px;top:646px;width:626px;height:1px;background:#bdbdbd"></div>
<div class="a" style="left:551px;top:647px;width:626px;height:21px;background:#fff"></div>
<div class="a" style="left:551px;top:647px;width:143px;height:21px;background:#e6e6e6;border-right:1px solid #a0a0a0"></div>
<svg class="a" style="left:1160px;top:652px" width="14" height="11"><rect x="1" y="0" width="12" height="1.6" fill="#999"/><path d="M1 10.5H13L7 3.5Z" fill="#999"/></svg>
<div class="a" style="left:1178px;top:121px;width:22px;height:547px;background:#fff"></div>
<div class="a" style="left:1178px;top:121px;width:22px;height:139px;background:#e6e6e6;border-bottom:1px solid #c0c0c0"></div>
<div class="a" style="left:1189.5px;top:132px;transform-origin:0 0;transform:rotate(90deg)"><div style="position:absolute;left:0;top:-6px;font-size:12px;line-height:12px;color:#2a2a2a;white-space:nowrap;letter-spacing:0.08px">ANALYSIS OPTIONS</div></div>
<svg class="a" style="left:1183px;top:651px" width="12" height="13"><rect x="0.5" y="0.5" width="1.6" height="12" fill="#999"/><path d="M10.8 0.5V12.5L3.5 6.5Z" fill="#999"/></svg>
<div class="a" style="left:0;top:668px;width:1200px;height:23px;background:#e6e6e6"></div>
<div class='a' style='left:28.10px;top:10.29px;font-size:11px;line-height:11px;color:#333;font-weight:400;letter-spacing:0.000px;transform:scaleX(0.8677);transform-origin:0 0;'>DESIGNER</div>
<div class='a' style='left:135.20px;top:10.29px;font-size:11px;line-height:11px;color:#fff;font-weight:400;letter-spacing:0.000px;transform:scaleX(0.9038);transform-origin:0 0;'>ANALYSIS</div>
<div class='a' style='left:220.40px;top:10.29px;font-size:11px;line-height:11px;color:#fff;font-weight:400;letter-spacing:0.000px;transform:scaleX(0.9174);transform-origin:0 0;'>DISPLAY OPTIONS</div>
<div class='a' style='left:27.40px;top:39.34px;font-size:12px;line-height:12px;color:#262626;font-weight:400;letter-spacing:-0.303px;'>New Session</div>
<div class='a' style='left:27.40px;top:63.34px;font-size:12px;line-height:12px;color:#262626;font-weight:400;letter-spacing:-0.245px;'>Open Session</div>
<div class='a' style='left:27.40px;top:87.64px;font-size:12px;line-height:12px;color:#262626;font-weight:400;letter-spacing:0.000px;transform:scaleX(0.9283);transform-origin:0 0;'>Save Session</div>
<div class='a' style='left:129.80px;top:72.14px;font-size:12px;line-height:12px;color:#262626;font-weight:400;letter-spacing:0.537px;'>Import</div>
<div class='a' style='left:135.10px;top:87.94px;font-size:12px;line-height:12px;color:#262626;font-weight:400;letter-spacing:-0.034px;'>Filter</div>
<div class='a' style='left:77.10px;top:107.99px;font-size:11px;line-height:11px;color:#6a6a6a;font-weight:400;letter-spacing:0.000px;transform:scaleX(0.8365);transform-origin:0 0;'>FILE</div>
<div class='a' style='left:195.40px;top:68.14px;font-size:12px;line-height:12px;color:#262626;font-weight:400;letter-spacing:-0.396px;'>Lowpass</div>
<div class='a' style='left:209.90px;top:84.34px;font-size:12px;line-height:12px;color:#262626;font-weight:400;letter-spacing:0.000px;transform:scaleX(0.8831);transform-origin:0 0;'>FIR</div>
<div class='a' style='left:261.60px;top:68.14px;font-size:12px;line-height:12px;color:#262626;font-weight:400;letter-spacing:-0.147px;'>Highpass</div>
<div class='a' style='left:277.60px;top:84.34px;font-size:12px;line-height:12px;color:#262626;font-weight:400;letter-spacing:0.000px;transform:scaleX(0.8886);transform-origin:0 0;'>FIR</div>
<div class='a' style='left:328.70px;top:68.14px;font-size:12px;line-height:12px;color:#262626;font-weight:400;letter-spacing:-0.339px;'>Bandpass</div>
<div class='a' style='left:345.40px;top:84.34px;font-size:12px;line-height:12px;color:#262626;font-weight:400;letter-spacing:0.000px;transform:scaleX(0.8886);transform-origin:0 0;'>FIR</div>
<div class='a' style='left:396.70px;top:68.14px;font-size:12px;line-height:12px;color:#262626;font-weight:400;letter-spacing:0.040px;'>Bandstop</div>
<div class='a' style='left:413.70px;top:84.34px;font-size:12px;line-height:12px;color:#262626;font-weight:400;letter-spacing:0.000px;transform:scaleX(0.8940);transform-origin:0 0;'>FIR</div>
<div class='a' style='left:461.10px;top:68.14px;font-size:12px;line-height:12px;color:#262626;font-weight:400;letter-spacing:0.078px;'>Different...</div>
<div class='a' style='left:482.10px;top:84.34px;font-size:12px;line-height:12px;color:#262626;font-weight:400;letter-spacing:0.000px;transform:scaleX(0.8886);transform-origin:0 0;'>FIR</div>
<div class='a' style='left:530.20px;top:68.14px;font-size:12px;line-height:12px;color:#262626;font-weight:400;letter-spacing:-0.114px;'>Hilbert FIR</div>
<div class='a' style='left:602.60px;top:68.14px;font-size:12px;line-height:12px;color:#262626;font-weight:400;letter-spacing:-0.060px;'>Complex</div>
<div class='a' style='left:603.70px;top:84.34px;font-size:12px;line-height:12px;color:#262626;font-weight:400;letter-spacing:-0.172px;'>Lowpas...</div>
<div class='a' style='left:406.10px;top:107.99px;font-size:11px;line-height:11px;color:#6a6a6a;font-weight:400;letter-spacing:0.000px;transform:scaleX(0.8480);transform-origin:0 0;'>RESPONSE</div>
<div class='a' style='left:697.00px;top:72.64px;font-size:12px;line-height:12px;color:#a9a9a9;font-weight:400;letter-spacing:0.139px;'>Update</div>
<div class='a' style='left:703.40px;top:88.14px;font-size:12px;line-height:12px;color:#a9a9a9;font-weight:400;letter-spacing:0.006px;'>Filter</div>
<div class='a' style='left:768.20px;top:39.44px;font-size:12px;line-height:12px;color:#262626;font-weight:400;letter-spacing:0.171px;'>Undo</div>
<div class='a' style='left:768.20px;top:63.34px;font-size:12px;line-height:12px;color:#a9a9a9;font-weight:400;letter-spacing:0.000px;transform:scaleX(0.9463);transform-origin:0 0;'>Redo</div>
<div class='a' style='left:768.20px;top:87.44px;font-size:12px;line-height:12px;color:#a9a9a9;font-weight:400;letter-spacing:-0.439px;'>Restore</div>
<div class='a' style='left:737.10px;top:108.29px;font-size:11px;line-height:11px;color:#6a6a6a;font-weight:400;letter-spacing:0.000px;transform:scaleX(0.8398);transform-origin:0 0;'>FILTER</div>
<div class='a' style='left:844.40px;top:39.44px;font-size:12px;line-height:12px;color:#262626;font-weight:400;letter-spacing:-0.085px;'>Edit Pole-Zero</div>
<div class='a' style='left:844.40px;top:63.34px;font-size:12px;line-height:12px;color:#262626;font-weight:400;letter-spacing:-0.102px;'>Transform Filter</div>
<div class='a' style='left:844.40px;top:87.44px;font-size:12px;line-height:12px;color:#a9a9a9;font-weight:400;letter-spacing:-0.355px;'>Cascade Filters</div>
<div class='a' style='left:853.40px;top:108.29px;font-size:11px;line-height:11px;color:#6a6a6a;font-weight:400;letter-spacing:0.000px;transform:scaleX(0.9185);transform-origin:0 0;'>ACTIONS</div>
<div class='a' style='left:943.40px;top:72.44px;font-size:12px;line-height:12px;color:#262626;font-weight:400;letter-spacing:-0.051px;'>Settings</div>
<div class='a' style='left:1004.40px;top:72.44px;font-size:12px;line-height:12px;color:#262626;font-weight:400;letter-spacing:-0.138px;'>Export</div>
<div class='a' style='left:942.70px;top:108.29px;font-size:11px;line-height:11px;color:#6a6a6a;font-weight:400;letter-spacing:0.000px;transform:scaleX(0.9275);transform-origin:0 0;'>OPTIONS</div>
<div class='a' style='left:1003.10px;top:108.29px;font-size:11px;line-height:11px;color:#6a6a6a;font-weight:400;letter-spacing:0.000px;transform:scaleX(0.8471);transform-origin:0 0;'>EXPORT</div>
<div class='a' style='left:23.70px;top:126.80px;font-size:13px;line-height:13px;color:#222;font-weight:400;letter-spacing:0.052px;'>Filters</div>
<div class='a' style='left:4.10px;top:153.44px;font-size:12px;line-height:12px;color:#111;font-weight:700;letter-spacing:0.371px;'>Name</div>
<div class='a' style='left:196.50px;top:153.24px;font-size:12px;line-height:12px;color:#111;font-weight:700;letter-spacing:-0.291px;'>Line</div>
<div class='a' style='left:360.80px;top:153.24px;font-size:12px;line-height:12px;color:#111;font-weight:700;letter-spacing:-0.103px;'>Sample Rate</div>
<div class='a' style='left:454.10px;top:153.24px;font-size:12px;line-height:12px;color:#111;font-weight:700;letter-spacing:-0.082px;'>Update Status</div>
<div class='a' style='left:25.00px;top:178.04px;font-size:12px;line-height:12px;color:#3a3a3a;font-weight:400;letter-spacing:0.144px;'>hilbertfir1</div>
<div class='a' style='left:360.90px;top:179.14px;font-size:12px;line-height:12px;color:#3a3a3a;font-weight:400;letter-spacing:-0.047px;'>2 kHz</div>
<div class='a' style='left:23.40px;top:203.70px;font-size:13px;line-height:13px;color:#fff;font-weight:400;letter-spacing:0.089px;'>Parameters</div>
<div class='a' style='left:5.00px;top:228.14px;font-size:12px;line-height:12px;color:#2a2a2a;font-weight:400;letter-spacing:0.014px;'>Hilbert FIR - hilbertfir1</div>
<div class='a' style='left:8.40px;top:273.04px;font-size:12px;line-height:12px;color:#555;font-weight:400;letter-spacing:-0.081px;'>Specifications</div>
<div class='a' style='left:110.80px;top:273.24px;font-size:12px;line-height:12px;color:#555;font-weight:400;letter-spacing:0.348px;'>Multirate</div>
<div class='a' style='left:187.60px;top:273.24px;font-size:12px;line-height:12px;color:#555;font-weight:400;letter-spacing:0.251px;'>Arithmetic</div>
<div class='a' style='left:19.40px;top:298.44px;font-size:12px;line-height:12px;color:#222;font-weight:400;letter-spacing:-0.237px;'>Sample Rate</div>
<div class='a' style='left:11.90px;top:328.14px;font-size:12px;line-height:12px;color:#222;font-weight:400;letter-spacing:-0.135px;'>Frequency units</div>
<div class='a' style='left:107.40px;top:327.44px;font-size:12px;line-height:12px;color:#111;font-weight:400;letter-spacing:0.328px;'>Hz</div>
<div class='a' style='left:258.40px;top:328.14px;font-size:12px;line-height:12px;color:#222;font-weight:400;letter-spacing:-0.082px;'>Input sample rate (Hz)</div>
<div class='a' style='left:391.90px;top:327.64px;font-size:12px;line-height:12px;color:#222;font-weight:400;letter-spacing:-0.401px;'>2000</div>
<div class='a' style='left:19.90px;top:365.34px;font-size:12px;line-height:12px;color:#222;font-weight:400;letter-spacing:-0.017px;'>Filter Order</div>
<div class='a' style='left:9.90px;top:393.14px;font-size:12px;line-height:12px;color:#222;font-weight:400;letter-spacing:0.052px;'>Order mode</div>
<div class='a' style='left:86.40px;top:391.44px;font-size:12px;line-height:12px;color:#111;font-weight:400;letter-spacing:-0.060px;'>Specify</div>
<div class='a' style='left:222.00px;top:393.14px;font-size:12px;line-height:12px;color:#222;font-weight:400;letter-spacing:0.328px;'>Order</div>
<div class='a' style='left:265.40px;top:391.64px;font-size:12px;line-height:12px;color:#222;font-weight:400;letter-spacing:-0.359px;'>12</div>
<div class='a' style='left:19.40px;top:428.34px;font-size:12px;line-height:12px;color:#222;font-weight:400;letter-spacing:-0.134px;'>Frequency Specifications</div>
<div class='a' style='left:9.90px;top:458.64px;font-size:12px;line-height:12px;color:#222;font-weight:400;letter-spacing:-0.055px;'>Transition width (Hz)</div>
<div class='a' style='left:134.00px;top:458.64px;font-size:12px;line-height:12px;color:#222;font-weight:400;letter-spacing:0.084px;'>400</div>
<div class='a' style='left:19.40px;top:494.84px;font-size:12px;line-height:12px;color:#222;font-weight:400;letter-spacing:0.414px;'>Algorithm</div>
<div class='a' style='left:9.90px;top:523.24px;font-size:12px;line-height:12px;color:#222;font-weight:400;letter-spacing:0.065px;'>Design method</div>
<div class='a' style='left:103.40px;top:522.14px;font-size:12px;line-height:12px;color:#111;font-weight:400;letter-spacing:-0.013px;'>FIR least-squares</div>
<div class='a' style='left:576.40px;top:128.44px;font-size:12px;line-height:12px;color:#222;font-weight:400;letter-spacing:-0.003px;'>1 (active): Magnitude</div>
<div class='a' style='left:587.90px;top:148.12px;font-size:12.5px;line-height:12.5px;color:#222;font-weight:400;letter-spacing:0.108px;'>hilbertfir1</div>
<div class='a' style='left:792.70px;top:174.00px;font-size:15px;line-height:15px;color:#3c3c3c;font-weight:400;letter-spacing:0.020px;'>Magnitude Response (dB)</div>
<div class='a' style='left:827.80px;top:621.30px;font-size:15px;line-height:15px;color:#3c3c3c;font-weight:400;letter-spacing:0.049px;'>Frequency (Hz)</div>
<div class='a' style='left:558.90px;top:651.84px;font-size:12px;line-height:12px;color:#333;font-weight:400;letter-spacing:0.006px;'>FILTER INFORMATION</div>
<div class='a' style='left:804.40px;top:673.54px;font-size:12px;line-height:12px;color:#222;font-weight:400;letter-spacing:-0.009px;'>Analysis Sample Rate = 2 kHz | Frequency Normalization = Unnormalized</div>
</body></html>
